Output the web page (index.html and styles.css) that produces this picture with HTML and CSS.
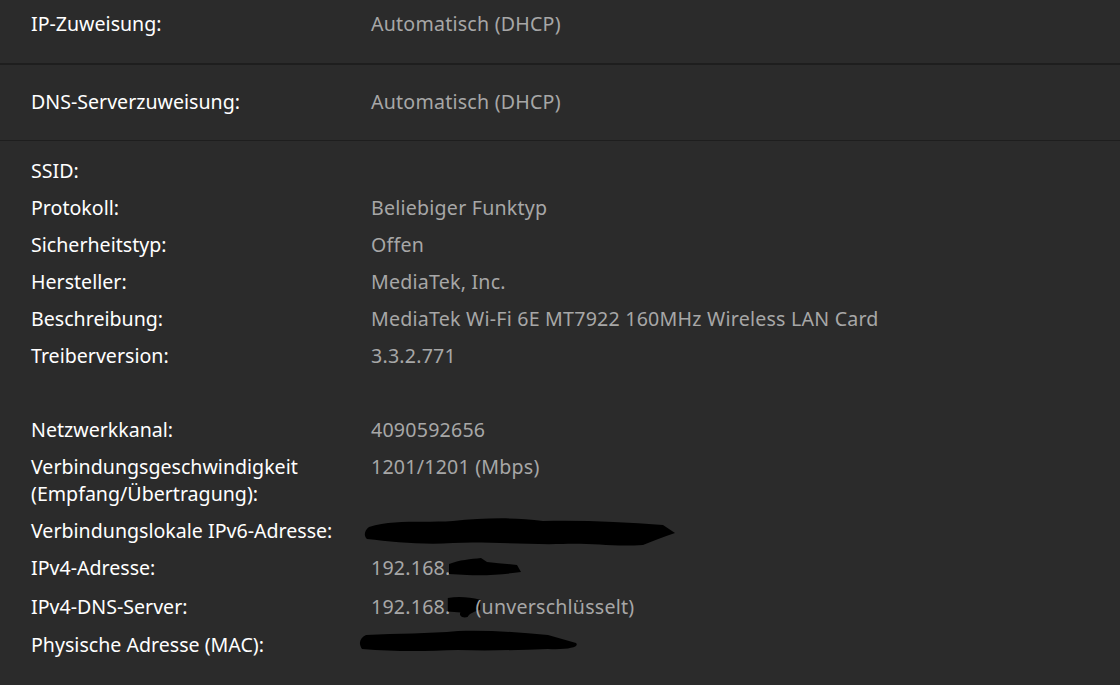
FILE: index.html
```html
<!DOCTYPE html>
<html lang="de">
<head>
<meta charset="utf-8">
<title>Eigenschaften</title>
<link rel="stylesheet" href="styles.css">
</head>
<body>
<div class="page">
  <section class="card card-first">
    <div class="row"><span class="label">IP-Zuweisung:</span><span class="value">Automatisch (DHCP)</span></div>
  </section>
  <section class="card card-second">
    <div class="row"><span class="label">DNS-Serverzuweisung:</span><span class="value">Automatisch (DHCP)</span></div>
  </section>
  <section class="card details">
    <div class="row"><span class="label">SSID:</span><span class="value"></span></div>
    <div class="row"><span class="label">Protokoll:</span><span class="value">Beliebiger Funktyp</span></div>
    <div class="row"><span class="label">Sicherheitstyp:</span><span class="value">Offen</span></div>
    <div class="row"><span class="label">Hersteller:</span><span class="value">MediaTek, Inc.</span></div>
    <div class="row"><span class="label">Beschreibung:</span><span class="value">MediaTek Wi-Fi 6E MT7922 160MHz Wireless LAN Card</span></div>
    <div class="row"><span class="label">Treiberversion:</span><span class="value">3.3.2.771</span></div>
    <div class="row"><span class="label">&nbsp;</span></div>
    <div class="row"><span class="label">Netzwerkkanal:</span><span class="value">4090592656</span></div>
    <div class="row"><span class="label">Verbindungsgeschwindigkeit<br>(Empfang/Übertragung):</span><span class="value">1201/1201 (Mbps)</span></div>
    <div class="row"><span class="label">Verbindungslokale IPv6-Adresse:</span><span class="value"><span class="blob blob-v6"><svg width="316" height="34" viewBox="0 0 316 34"><path d="M6 12 C30 4 60 8 90 6 C120 3 150 2 180 6 C220 5 260 7 300 10 L312 18 C300 22 290 26 280 30 C250 32 230 28 200 29 C160 30 120 26 90 28 C60 30 30 27 4 24 C0 20 2 15 6 12 Z" fill="#000"/></svg></span></span></div>
    <div class="row"><span class="label">IPv4-Adresse:</span><span class="value">192.168.<span class="blob blob-v4"><svg width="76" height="22" viewBox="0 0 76 22"><path d="M2 8 C12 4 24 3 34 2 L40 6 C50 7 60 8 70 9 L74 16 C60 18 40 20 20 19 L2 18 Z" fill="#000"/></svg></span></span></div>
    <div class="row"><span class="label">IPv4-DNS-Server:</span><span class="value">192.168.<span class="blob blob-dns"><svg width="36" height="26" viewBox="0 0 40 26"><path d="M2 3 C14 1 26 2 38 5 L38 16 C32 18 26 20 24 24 C18 26 14 22 16 19 L2 18 Z" fill="#000"/></svg></span>(unverschlüsselt)</span></div>
    <div class="row"><span class="label">Physische Adresse (MAC):</span><span class="value"><span class="blob blob-mac"><svg width="226" height="24" viewBox="0 0 226 24"><path d="M8 6 C40 4 70 5 100 2 C130 1 160 3 190 6 L218 14 C222 18 210 21 190 20 C160 21 130 22 100 21 C70 22 40 23 4 20 C0 14 2 9 8 6 Z" fill="#000"/></svg></span></span></div>
  </section>
</div>
</body>
</html>
```

FILE: styles.css
```css
html, body {
  margin: 0;
  padding: 0;
  background: #2b2b2b;
}
body {
  font-family: "Noto Sans", "Open Sans", sans-serif;
  font-size: 19.6px;
  color: #ffffff;
  overflow: hidden;
}
.page {
  width: 1120px;
  height: 685px;
  overflow: hidden;
}
.card {
  background: #2b2b2b;
  padding-left: 31px;
}
.card-first {
  height: 65px;
  box-sizing: border-box;
  padding-top: 10px;
  border-bottom: 2px solid #1e1e1e;
}
.card-second {
  height: 76px;
  box-sizing: border-box;
  padding-top: 23px;
  border-bottom: 1px solid #1e1e1e;
}
.details {
  padding-top: 16px;
  display: flex;
  flex-direction: column;
  gap: 10px;
}
.row {
  display: flex;
  align-items: flex-start;
  line-height: 27px;
}
.label {
  width: 340px;
  flex: none;
}
.value {
  color: #a7a7a7;
  white-space: nowrap;
  letter-spacing: 0.22px;
}
.blob {
  display: inline-block;
  height: 27px;
  vertical-align: top;
}
.blob svg {
  display: block;
}
.blob-v6 { margin-left: -8px; margin-top: -2px; }
.blob-v4 { margin-left: -4px; margin-top: 2px; }
.blob-dns { margin-left: -5px; margin-right: -6px; margin-top: 1px; }
.blob-mac { margin-left: -13px; margin-top: -2px; }
```
